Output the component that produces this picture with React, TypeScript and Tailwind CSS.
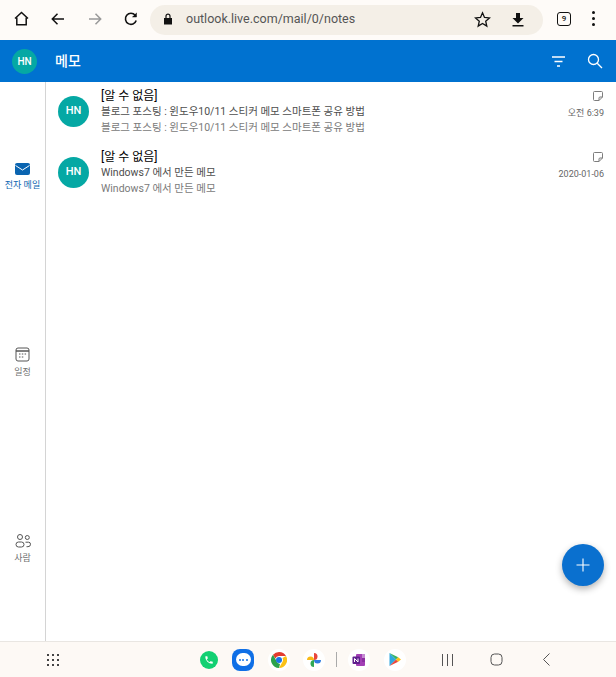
import React from "react";

const font = { fontFamily: '"Roboto","Noto Sans CJK KR",sans-serif' };

function Avatar({ size = "w-[31px] h-[31px] text-[11px]" }: { size?: string }) {
  return (
    <div className={`${size} shrink-0 rounded-full bg-[#05a8a4] text-white flex items-center justify-center font-medium`}>
      HN
    </div>
  );
}

function NoteIcon() {
  return (
    <svg width="12" height="12" viewBox="0 0 12 12" fill="none" stroke="#7d7d7d" strokeWidth="1">
      <path d="M2.500 1.500h7a1 1 0 0 1 1 1v4.500l-3.500 3.500H2.500a1 1 0 0 1-1-1v-7a1 1 0 0 1 1-1z" />
      <path d="M10.500 7H8a1 1 0 0 0-1 1v2.500" />
    </svg>
  );
}

function Row({ sub, time }: { sub: string; time: string }) {
  return (
    <div className="h-[61px] flex pl-[12px] pr-[12px]">
      <div className="pt-[14px]">
        <Avatar />
      </div>
      <div className="ml-[12px] flex-1 min-w-0 pt-[6px]">
        <div className="text-[12px] leading-[16px] text-black">[알 수 없음]</div>
        <div className="text-[10.500px] leading-[16px] text-[#4d4d4d]">{sub}</div>
        <div className="text-[10.500px] leading-[16px] text-[#7a7a7a]">{sub}</div>
      </div>
      <div className="flex flex-col items-end pt-[8px]">
        <NoteIcon />
        <div className="mt-[5px] text-[9px] leading-[12px] text-[#666]">{time}</div>
      </div>
    </div>
  );
}

function SideItem({ icon, label, active }: { icon: React.ReactNode; label: string; active?: boolean }) {
  return (
    <div className="flex flex-col items-center">
      {icon}
      <div className={`mt-[4px] text-[9px] leading-[12px] ${active ? "text-[#0a64b0]" : "text-[#707070]"}`}>{label}</div>
    </div>
  );
}

function DockIcon({ children, className = "" }: { children: React.ReactNode; className?: string }) {
  return <div className={`w-[22px] h-[22px] rounded-full bg-white flex items-center justify-center ${className}`}>{children}</div>;
}

export default function App() {
  return (
    <div className="relative w-[616px] h-[677px] flex flex-col bg-white overflow-hidden" style={font}>
      {/* Browser bar */}
      <div className="h-[40px] bg-[#fefbf8] flex items-center shrink-0 pb-[3px]">
        <div className="w-[150px] pl-[13px] flex items-center gap-[16px]">
          <svg width="17" height="17" viewBox="0 0 17 17" fill="none" stroke="#111" strokeWidth="1.500">
            <path d="M2 8.500 8.500 2.500 15 8.500" />
            <path d="M3.800 7.500V14.700H13.200V7.500" />
          </svg>
          <svg className="ml-[4px]" width="16" height="16" viewBox="0 0 16 16" fill="none" stroke="#111" strokeWidth="1.500">
            <path d="M14 8H2.500M7.500 2.800 2.300 8l5.200 5.200" />
          </svg>
          <svg className="ml-[5px]" width="16" height="16" viewBox="0 0 16 16" fill="none" stroke="#999" strokeWidth="1.500">
            <path d="M2 8h11.500M8.500 2.800 13.700 8l-5.200 5.200" />
          </svg>
          <svg className="ml-[4px]" width="16" height="16" viewBox="0 0 16 16" fill="none" stroke="#111" strokeWidth="1.600">
            <path d="M13.200 9.500A5.500 5.500 0 1 1 12.200 4.300" />
            <path d="M13.500 1.800V6H9.300" fill="#111" strokeWidth="0.500" />
          </svg>
        </div>
        <div className="w-[393px] h-[30px] rounded-full bg-[#f4efe7] flex items-center pl-[13px] pr-[16px] mt-[3px]">
          <svg className="-mt-[2px]" width="10" height="12" viewBox="0 0 10 12" fill="#111">
            <path d="M1 5h8v6.500H1z" />
            <path d="M3 5V3.200a2 2 0 0 1 4 0V5" fill="none" stroke="#111" strokeWidth="1.200" />
          </svg>
          <span className="ml-[13px] -mt-[2px] text-[12.500px] text-[#555]">outlook.live.com/mail/0/notes</span>
          <div className="ml-auto flex items-center gap-[20px] -mt-[2px] pr-[2px]">
            <svg width="17" height="17" viewBox="0 0 17 17" fill="none" stroke="#111" strokeWidth="1.300">
              <path d="M8.500 1.800 10.500 6.400 15.500 6.900 11.700 10.200 12.800 15.100 8.500 12.500 4.200 15.100 5.300 10.200 1.500 6.900 6.500 6.400z" />
            </svg>
            <svg width="14" height="15" viewBox="0 0 14 15" fill="#111">
              <path d="M5 1h4v5h3.500L7 11.500 1.500 6H5z" />
              <path d="M1.500 13h11v1.500h-11z" />
            </svg>
          </div>
        </div>
        <div className="ml-[14px] w-[14px] h-[14px] rounded-[3px] border-[1.500px] border-[#111] flex items-center justify-center text-[8px] font-medium text-[#111]">
          9
        </div>
        <div className="ml-[21px] flex flex-col gap-[3px]">
          <div className="w-[3px] h-[3px] rounded-full bg-[#111]" />
          <div className="w-[3px] h-[3px] rounded-full bg-[#111]" />
          <div className="w-[3px] h-[3px] rounded-full bg-[#111]" />
        </div>
      </div>

      {/* App header */}
      <div className="h-[42px] bg-[#0072d0] shrink-0 flex items-center pl-[12px] pr-[13px]">
        <Avatar size="w-[25px] h-[25px] text-[10px]" />
        <div className="ml-[18px] text-[14px] font-medium text-white">메모</div>
        <svg className="ml-auto" width="15" height="15" viewBox="0 0 15 15" stroke="#fff" strokeWidth="1.300">
          <path d="M1 3h13M3.500 7.500h8M6 12h3" />
        </svg>
        <svg className="ml-[21px]" width="16" height="16" viewBox="0 0 16 16" fill="none" stroke="#fff" strokeWidth="1.300">
          <circle cx="6.500" cy="6.500" r="5" />
          <path d="M10.200 10.200 15 15" />
        </svg>
      </div>

      {/* Body */}
      <div className="flex-1 flex min-h-0">
        <div className="w-[46px] shrink-0 border-r border-[#d4d4d4] relative flex flex-col items-center pt-[81px] gap-[156px]">
          <SideItem
            active
            label="전자 메일"
            icon={
              <svg width="15" height="12" viewBox="0 0 15 12">
                <rect width="15" height="12" rx="2" fill="#0a64b0" />
                <path d="M0.500 2.500 7.500 7 14.500 2.500" fill="none" stroke="#fff" strokeWidth="1" />
              </svg>
            }
          />
          <SideItem
            label="일정"
            icon={
              <svg width="15" height="15" viewBox="0 0 15 15" fill="none" stroke="#555" strokeWidth="1">
                <rect x="1" y="1" width="13" height="13" rx="2" />
                <path d="M1 4h13" strokeWidth="1.500" />
                <path d="M4 7h1.500M6.800 7h1.500M9.600 7h1.500M4 10h1.500M6.800 10h1.500" />
              </svg>
            }
          />
          <SideItem
            label="사람"
            icon={
              <svg width="16" height="14" viewBox="0 0 16 14" fill="none" stroke="#555" strokeWidth="1">
                <circle cx="5" cy="3" r="2.500" />
                <circle cx="12.300" cy="3.500" r="2" />
                <rect x="1" y="8" width="8" height="5" rx="2.500" />
                <path d="M10.500 8.200h3a2 2 0 0 1 2 2 2.500 2.500 0 0 1-2.500 2.500h-1.500" />
              </svg>
            }
          />
        </div>
        <div className="flex-1 min-w-0">
          <Row sub="블로그 포스팅 : 윈도우10/11 스티커 메모 스마트폰 공유 방법" time="오전 6:39" />
          <Row sub="Windows7 에서 만든 메모" time="2020-01-06" />
        </div>
      </div>

      {/* Android nav */}
      <div className="h-[36px] shrink-0 bg-[#fdf9f5] border-t border-[#e9e6e2] flex items-center">
        <div className="ml-[47px] grid grid-cols-3 gap-x-[3px] gap-y-[3px]">
          {Array.from({ length: 9 }).map((_, i) => (
            <div key={i} className="w-[2px] h-[2px] bg-[#444]" />
          ))}
        </div>
        <div className="ml-[141px] flex items-center gap-[14px]">
          <div className="w-[18px] h-[18px] rounded-full bg-[#12d072] flex items-center justify-center">
            <svg width="10" height="10" viewBox="0 0 24 24" fill="#fff">
              <path d="M6.600 10.800a15 15 0 0 0 6.600 6.600l2.200-2.200a1 1 0 0 1 1-.25 11 11 0 0 0 3.600.6 1 1 0 0 1 1 1V20a1 1 0 0 1-1 1A17 17 0 0 1 3 4a1 1 0 0 1 1-1h3.500a1 1 0 0 1 1 1 11 11 0 0 0 .6 3.600 1 1 0 0 1-.25 1z" />
            </svg>
          </div>
          <div className="w-[22px] h-[22px] rounded-[8px] bg-[#0f6fe6] flex items-center justify-center">
            <div className="w-[15px] h-[13px] rounded-full bg-white flex items-center justify-center gap-[1.500px]">
              <div className="w-[2px] h-[2px] rounded-full bg-[#0f6fe6]" />
              <div className="w-[2px] h-[2px] rounded-full bg-[#0f6fe6]" />
              <div className="w-[2px] h-[2px] rounded-full bg-[#0f6fe6]" />
            </div>
          </div>
          <DockIcon>
            <svg width="16" height="16" viewBox="0 0 16 16">
              <path d="M8 0a8 8 0 0 1 7 4H8a4 4 0 0 0-3.700 2.500L2 2.800A8 8 0 0 1 8 0z" fill="#e33b2e" />
              <path d="M15 4a8 8 0 0 1-7 12l3.400-6A4 4 0 0 0 11.500 6z" fill="#fbc116" />
              <path d="M2 2.800 5.500 9A4 4 0 0 0 9 11.900L8 16A8 8 0 0 1 2 2.800z" fill="#2ba24c" />
              <circle cx="8" cy="8" r="3" fill="#1a73e8" />
            </svg>
          </DockIcon>
          <DockIcon className="-ml-[1px]">
            <svg width="16" height="16" viewBox="0 0 16 16">
              <path d="M8 8V1a3.500 3.500 0 0 1 0 7z" fill="#e8453c" />
              <path d="M8 8H15a3.500 3.500 0 0 1-7 0z" fill="#2f7de1" />
              <path d="M8 8V15a3.500 3.500 0 0 1 0-7z" fill="#31a853" />
              <path d="M8 8H1a3.500 3.500 0 0 1 7 0z" fill="#f9b916" />
            </svg>
          </DockIcon>
          <div className="w-px h-[15px] bg-[#aaa] -ml-[3px]" />
          <DockIcon className="-ml-[3px]">
            <svg width="14" height="14" viewBox="0 0 14 14">
              <rect x="4" y="1" width="9" height="12" rx="1" fill="#a33fb5" />
              <rect x="10" y="1" width="3" height="4" fill="#c48ad2" />
              <rect x="10" y="5" width="3" height="4" fill="#8b2ea1" />
              <rect x="0.500" y="3.500" width="7.500" height="7.500" rx="1" fill="#5f1f8e" />
              <path d="M2.500 9V5.500L6 9V5.500" fill="none" stroke="#fff" strokeWidth="1" />
            </svg>
          </DockIcon>
          <DockIcon>
            <svg width="14" height="15" viewBox="0 0 14 15">
              <path d="M1.500 1v13L8 7.500z" fill="#2fa8e0" />
              <path d="M1.500 1 8 7.500l2.200-2.200z" fill="#35b368" />
              <path d="M1.500 14 8 7.500l2.200 2.200z" fill="#e8453c" />
              <path d="M10.200 5.300 13 7.500l-2.800 2.200L8 7.500z" fill="#fbc116" />
            </svg>
          </DockIcon>
        </div>
        <svg className="ml-[35px]" width="13" height="12" viewBox="0 0 13 12" stroke="#555" strokeWidth="1">
          <path d="M1.500 0v12M6.500 0v12M11.500 0v12" />
        </svg>
        <svg className="ml-[36px]" width="13" height="13" viewBox="0 0 13 13" fill="none" stroke="#555" strokeWidth="1">
          <rect x="1" y="1" width="11" height="11" rx="3.500" />
        </svg>
        <svg className="ml-[39px]" width="9" height="13" viewBox="0 0 9 13" fill="none" stroke="#555" strokeWidth="1">
          <path d="M7.500 0.500 1.500 6.500l6 6" />
        </svg>
      </div>

      {/* FAB */}
      <div className="absolute left-[562px] top-[544px] w-[42px] h-[42px] rounded-full bg-[#0a70cf] flex items-center justify-center shadow-[0_3px_7px_rgba(0,0,0,0.3)]">
        <svg width="14" height="14" viewBox="0 0 14 14" stroke="#fff" strokeWidth="1.100">
          <path d="M7 0.500v13M0.500 7h13" />
        </svg>
      </div>
    </div>
  );
}
